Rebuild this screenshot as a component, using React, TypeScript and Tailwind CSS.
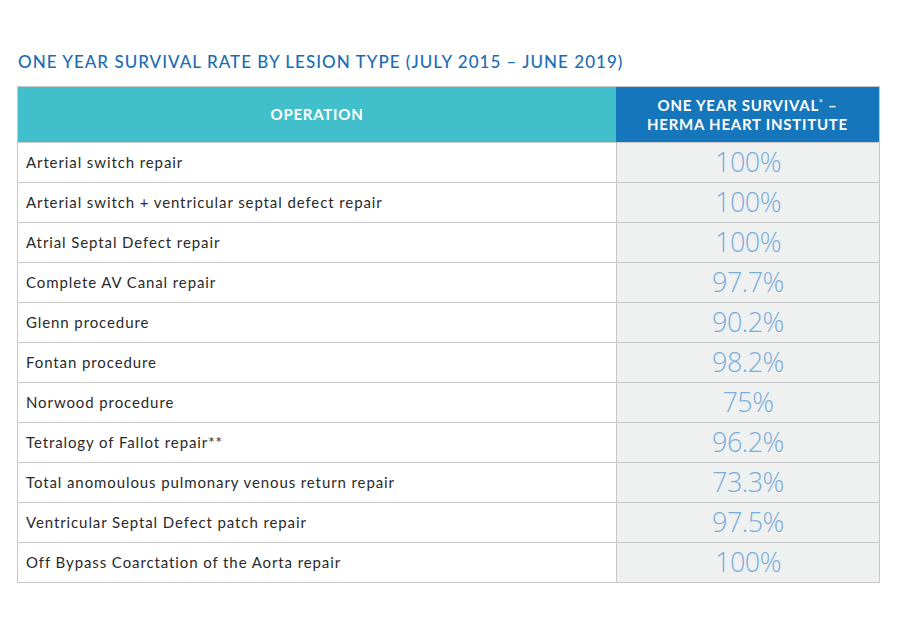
const rows: [string, string][] = [
  ["Arterial switch repair", "100%"],
  ["Arterial switch + ventricular septal defect repair", "100%"],
  ["Atrial Septal Defect repair", "100%"],
  ["Complete AV Canal repair", "97.7%"],
  ["Glenn procedure", "90.2%"],
  ["Fontan procedure", "98.2%"],
  ["Norwood procedure", "75%"],
  ["Tetralogy of Fallot repair**", "96.2%"],
  ["Total anomoulous pulmonary venous return repair", "73.3%"],
  ["Ventricular Septal Defect patch repair", "97.5%"],
  ["Off Bypass Coarctation of the Aorta repair", "100%"],
];

export default function App() {
  return (
    <div className="w-[900px] h-[628px] bg-white pt-[52px] pl-[17px]" style={{ fontFamily: "Lato, 'Open Sans', sans-serif" }}>
      <div className="text-[17px] font-medium text-[#1a6db5] tracking-[0.06em] leading-[20px] pl-[1px]">
        ONE YEAR SURVIVAL RATE BY LESION TYPE (JULY 2015 – JUNE 2019)
      </div>
      <div className="mt-[14px] w-[863px] border border-[#c8c8c8]">
        <div className="flex h-[55px]">
          <div className="w-[598px] bg-[#41bfcb] text-white font-bold text-[15px] tracking-[0.05em] flex items-center justify-center">OPERATION</div>
          <div className="flex-1 bg-[#1576bb] text-white font-bold text-[15px] tracking-[0.05em] leading-[19px] flex flex-col items-center justify-center text-center">
            <div>ONE YEAR SURVIVAL<sup className="text-[9px]">*</sup> –</div>
            <div>HERMA HEART INSTITUTE</div>
          </div>
        </div>
        {rows.map(([op, v]) => (
          <div key={op} className="flex h-[40px] border-t border-[#c8c8c8] box-border">
            <div className="w-[598px] flex items-center pl-[8px] text-[15px] text-[#2a2a2a] tracking-[0.06em]">{op}</div>
            <div className="flex-1 bg-[#eff0f0] border-l border-[#c8c8c8] flex items-center justify-center text-[27px] text-[#78aedb] tracking-[-0.02em]" style={{ fontFamily: "'Open Sans', sans-serif", fontWeight: 300 }}>{v}</div>
          </div>
        ))}
      </div>
    </div>
  );
}
